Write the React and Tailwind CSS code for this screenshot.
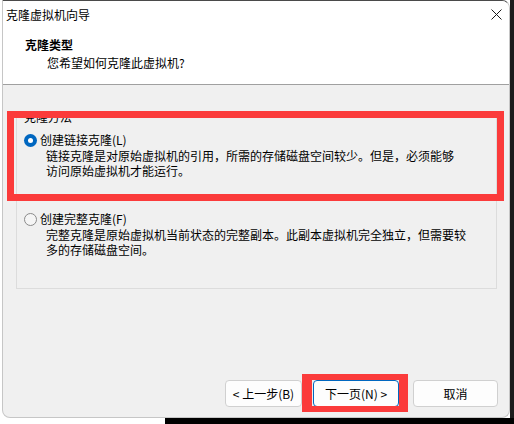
import React, { useState } from 'react';

const FONT = { fontFamily: '"Microsoft YaHei UI", "Noto Sans CJK SC", "Noto Sans", sans-serif' };

const Radio = ({ checked, onClick }) => (
  <span
    onClick={onClick}
    className={
      checked
        ? 'flex w-[13px] h-[13px] rounded-full bg-[#0067c0] items-center justify-center shrink-0'
        : 'flex w-[13px] h-[13px] rounded-full border border-[#8a8a8a] bg-[#f5f5f5] shrink-0'
    }
  >
    {checked && <span className="w-[5px] h-[5px] rounded-full bg-white" />}
  </span>
);

const Option = ({ checked, onClick, label, lines, className }) => (
  <div className={className}>
    <div className="flex items-center h-[16px] ml-[7px] cursor-default" onClick={onClick}>
      <Radio checked={checked} />
      <span className="ml-[3px] leading-[16px]">{label}</span>
    </div>
    <p className="ml-[29px] leading-[15px]">
      {lines[0]}
      <br />
      {lines[1]}
    </p>
  </div>
);

const Button = ({ children, primary, className }) => (
  <button
    className={
      'h-[27px] rounded-[4px] bg-[#fdfdfd] text-[12px] text-black flex items-center justify-center border ' +
      (primary ? 'border-[#0067c0]' : 'border-[#d0d0d0]') +
      ' ' +
      className
    }
  >
    {children}
  </button>
);

export default function App() {
  const [mode, setMode] = useState('linked');

  return (
    <div className="w-[514px] h-[424px] bg-white overflow-hidden flex flex-col text-[12px] text-black" style={FONT}>
      <div className="flex h-[418px]">
        <div className="ml-[2px] w-[508px] h-full flex flex-col bg-[#f0f0f0] border border-[#c6c6c6] border-t-[#4a4a4a] rounded-tr-lg rounded-b-lg overflow-hidden">
          {/* header */}
          <div className="bg-white border-b border-[#a0a0a0] h-[84px] shrink-0">
            <div className="h-[27px] flex items-center justify-between pl-[3px] pr-[6px]">
              <span className="leading-[16px]">克隆虚拟机向导</span>
              <svg width="11" height="11" viewBox="0 0 11 11" className="mr-[1px]">
                <path d="M0.5 0.5 L10.5 10.5 M10.5 0.5 L0.5 10.5" stroke="#1a1a1a" strokeWidth="1" />
              </svg>
            </div>
            <div className="pl-[22px] mt-[9px] font-bold leading-[16px]">克隆类型</div>
            <div className="pl-[44px] mt-[2px] leading-[16px]">您希望如何克隆此虚拟机?</div>
          </div>

          {/* body */}
          <div className="flex-1 flex flex-col">
            <div className="relative mt-[24px] ml-[13px] w-[481px]">
              <fieldset className="border border-[#dcdcdc] h-[180px] p-0 m-0 min-w-0">
                <legend className="ml-[6px] px-[1px] leading-[16px]">克隆方法</legend>
                <Option
                  className="mt-[7px]"
                  checked={mode === 'linked'}
                  onClick={() => setMode('linked')}
                  label="创建链接克隆(L)"
                  lines={[
                    '链接克隆是对原始虚拟机的引用，所需的存储磁盘空间较少。但是，必须能够',
                    '访问原始虚拟机才能运行。',
                  ]}
                />
                <Option
                  className="mt-[33px]"
                  checked={mode === 'full'}
                  onClick={() => setMode('full')}
                  label="创建完整克隆(F)"
                  lines={[
                    '完整克隆是原始虚拟机当前状态的完整副本。此副本虚拟机完全独立，但需要较',
                    '多的存储磁盘空间。',
                  ]}
                />
              </fieldset>
              {/* highlight box */}
              <div className="absolute left-[-9px] right-[-7px] top-[2px] h-[90px] border-[7px] border-[#fb3b3b] pointer-events-none" />
            </div>

            <div className="mt-auto mb-[10px] flex justify-end pr-[11px]">
              <Button className="w-[77px]">&lt; 上一步(B)</Button>
              <span className="relative ml-[11px]">
                <Button primary className="w-[86px]">下一页(N) &gt;</Button>
                <span className="absolute left-[-11px] right-[-9px] top-[-6px] bottom-[-5px] border-y-[6px] border-l-[10px] border-r-[9px] border-[#fb3b3b] pointer-events-none" />
              </span>
              <Button className="w-[85px] ml-[14px]">取消</Button>
            </div>
          </div>
        </div>
        <div className="w-[4px] h-full bg-[#1c1c1c]" />
      </div>
      <div className="flex h-[6px]">
        <div className="w-[165px] bg-white" />
        <div className="flex-1 bg-black" />
      </div>
    </div>
  );
}
